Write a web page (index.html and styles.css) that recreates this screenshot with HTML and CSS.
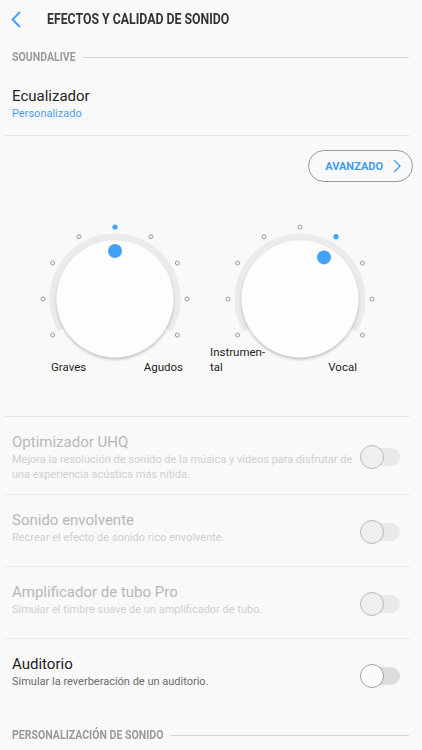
FILE: index.html
```html
<!DOCTYPE html>
<html lang="es">
<head>
    <meta charset="UTF-8">
    <meta name="viewport" content="width=device-width, initial-scale=1.0">
    <title>Efectos y calidad de sonido</title>
    <link rel="stylesheet" href="styles.css">
</head>
<body>
    <div class="app-bar">
        <svg class="back" width="11" height="17" viewBox="0 0 11 17">
            <polyline points="9,1 1.5,8.5 9,16" />
        </svg>
        <h1>EFECTOS Y CALIDAD DE SONIDO</h1>
    </div>

    <div class="section-head"><span>SOUNDALIVE</span></div>

    <div class="eq-row">
        <div class="row-title">Ecualizador</div>
        <div class="row-sub">Personalizado</div>
    </div>

    <div class="adv-row">
        <button class="adv-btn">AVANZADO
            <svg width="8" height="14" viewBox="0 0 8 14"><polyline points="1,1 7,7 1,13" /></svg>
        </button>
    </div>

    <!-- knobs: dots every 30deg, r=72 around (80,80) -->
    <div class="dials">
        <div class="dial">
            <svg class="knob" width="160" height="145" viewBox="0 0 160 145">
                <path class="ring" d="M26.31 111 A62 62 0 1 1 133.69 111" />
                <circle class="face" cx="80" cy="80" r="58.5" />
                <circle class="tick" cx="17.65" cy="116" r="2" />
                <circle class="tick" cx="8" cy="80" r="2" />
                <circle class="tick" cx="17.65" cy="44" r="2" />
                <circle class="tick" cx="44" cy="17.65" r="2" />
                <circle class="tick on" cx="80" cy="8" r="2.6" />
                <circle class="tick" cx="116" cy="17.65" r="2" />
                <circle class="tick" cx="142.35" cy="44" r="2" />
                <circle class="tick" cx="152" cy="80" r="2" />
                <circle class="tick" cx="142.35" cy="116" r="2" />
                <circle class="pointer" cx="80" cy="32" r="7" />
            </svg>
            <div class="dial-labels left">
                <span>Graves</span>
                <span>Agudos</span>
            </div>
        </div>
        <div class="dial">
            <svg class="knob" width="160" height="145" viewBox="0 0 160 145">
                <path class="ring" d="M26.31 111 A62 62 0 1 1 133.69 111" />
                <circle class="face" cx="80" cy="80" r="58.5" />
                <circle class="tick" cx="17.65" cy="116" r="2" />
                <circle class="tick" cx="8" cy="80" r="2" />
                <circle class="tick" cx="17.65" cy="44" r="2" />
                <circle class="tick" cx="44" cy="17.65" r="2" />
                <circle class="tick" cx="80" cy="8" r="2" />
                <circle class="tick on" cx="116" cy="17.65" r="2.6" />
                <circle class="tick" cx="142.35" cy="44" r="2" />
                <circle class="tick" cx="152" cy="80" r="2" />
                <circle class="tick" cx="142.35" cy="116" r="2" />
                <circle class="pointer" cx="104" cy="38.4" r="7" />
            </svg>
            <div class="dial-labels right">
                <span>Instrumen-<br>tal</span>
                <span>Vocal</span>
            </div>
        </div>
    </div>

    <div class="setting disabled">
        <div class="setting-text">
            <div class="row-title">Optimizador UHQ</div>
            <div class="row-desc">Mejora la resolución de sonido de la música y vídeos para disfrutar de una experiencia acústica más nítida.</div>
        </div>
        <span class="switch"></span>
    </div>

    <div class="setting disabled">
        <div class="setting-text">
            <div class="row-title">Sonido envolvente</div>
            <div class="row-desc">Recrear el efecto de sonido rico envolvente.</div>
        </div>
        <span class="switch"></span>
    </div>

    <div class="setting disabled">
        <div class="setting-text">
            <div class="row-title">Amplificador de tubo Pro</div>
            <div class="row-desc">Simular el timbre suave de un amplificador de tubo.</div>
        </div>
        <span class="switch"></span>
    </div>

    <div class="setting">
        <div class="setting-text">
            <div class="row-title">Auditorio</div>
            <div class="row-desc">Simular la reverberación de un auditorio.</div>
        </div>
        <span class="switch"></span>
    </div>

    <div class="section-head bottom"><span>PERSONALIZACIÓN DE SONIDO</span></div>
</body>
</html>
```

FILE: styles.css
```css
body, html {
    margin: 0;
    padding: 0;
    height: 100%;
    font-family: Roboto, "Noto Sans", sans-serif;
    background-color: #f9f9f9;
    color: #242424;
    overflow: hidden;
}

.app-bar {
    display: flex;
    align-items: center;
    height: 37px;
    padding-left: 11px;
}

.back {
    fill: none;
    stroke: #3f9cf3;
    stroke-width: 1.8;
    margin-top: 1px;
    flex: none;
}

/* no condensed face installed, so squeeze Roboto Bold */
h1 {
    margin: 0 0 0 25px;
    font-size: 15px;
    font-weight: bold;
    color: #333;
    white-space: nowrap;
    transform: scaleX(0.82);
    transform-origin: left center;
}

.section-head {
    margin: 13px 13px 0 12px;
    font-size: 12px;
    font-weight: bold;
    line-height: 14px;
    color: #9a9a9a;
    background: linear-gradient(#d6d6d6, #d6d6d6) no-repeat left center / 100% 1px;
}

.section-head span {
    display: inline-block;
    padding-right: 8px;
    background-color: #f9f9f9;
    white-space: nowrap;
    transform: scaleX(0.88);
    transform-origin: left center;
}

.section-head.bottom {
    margin-top: 18px;
}

.row-title {
    font-size: 15px;
    line-height: 20px;
}

.row-sub {
    font-size: 11px;
    line-height: 15px;
    color: #4a9ef0;
}

.eq-row {
    padding: 22px 0 14px 7px;
    margin: 0 12px 0 5px;
    border-bottom: 1px solid #e8e8e8;
}

.adv-row {
    display: flex;
    justify-content: flex-end;
    padding: 14px 9px 0 0;
}

.adv-btn {
    display: flex;
    align-items: center;
    gap: 10px;
    height: 32px;
    padding: 0 11px 0 16px;
    border: 1.3px solid #9c9c9c;
    border-radius: 16px;
    background: transparent;
    font-family: Roboto, sans-serif;
    font-size: 11px;
    font-weight: bold;
    color: #3f9cf3;
}

.adv-btn svg {
    fill: none;
    stroke: #3f9cf3;
    stroke-width: 1.3;
}

.dials {
    display: flex;
    gap: 25px;
    padding: 37px 0 0 35px;
    margin-bottom: 41px;
}

.dial {
    width: 160px;
}

.knob {
    display: block;
}

.ring {
    fill: none;
    stroke: #ebebeb;
    stroke-width: 7;
}

.face {
    fill: #fdfdfd;
    filter: drop-shadow(0 2px 1.5px rgba(0, 0, 0, 0.22));
}

.tick {
    fill: none;
    stroke: #9d9d9d;
    stroke-width: 1;
}

.tick.on {
    fill: #42a2f7;
    stroke: none;
}

.pointer {
    fill: #42a2f7;
}

.dial-labels {
    display: flex;
    justify-content: space-between;
    align-items: flex-end;
    height: 30px;
    margin-top: -19px;
    font-size: 11.5px;
    line-height: 15px;
    color: #242424;
}

.dial-labels.left {
    padding: 0 12px 0 16px;
}

.dial-labels.right {
    margin-left: -10px;
    padding-right: 23px;
}

.setting {
    display: flex;
    align-items: center;
    box-sizing: border-box;
    min-height: 72px;
    margin: 0 12px 0 5px;
    padding: 15px 10px 12px 7px;
    border-top: 1px solid #e8e8e8;
}

.setting-text {
    flex: 1;
    align-self: flex-start;
}

.row-desc {
    font-size: 11px;
    line-height: 15px;
    color: #6b6b6b;
}

.disabled .row-title {
    color: #b7b7b7;
}

.disabled .row-desc {
    color: #cfcfcf;
}

.switch {
    position: relative;
    flex: none;
    width: 40px;
    height: 24px;
}

.switch::before {
    content: "";
    position: absolute;
    left: 5px;
    right: 0;
    top: 3px;
    bottom: 3px;
    border-radius: 9px;
    background-color: #dcdcdc;
}

.switch::after {
    content: "";
    position: absolute;
    left: 0;
    top: 0;
    width: 24px;
    height: 24px;
    box-sizing: border-box;
    border: 1.5px solid #a0a0a0;
    border-radius: 50%;
    background-color: #fafafa;
}

.disabled .switch::before {
    background-color: #e9e9e9;
}

.disabled .switch::after {
    border-color: #b9b9b9;
    background-color: #efefef;
}
```
